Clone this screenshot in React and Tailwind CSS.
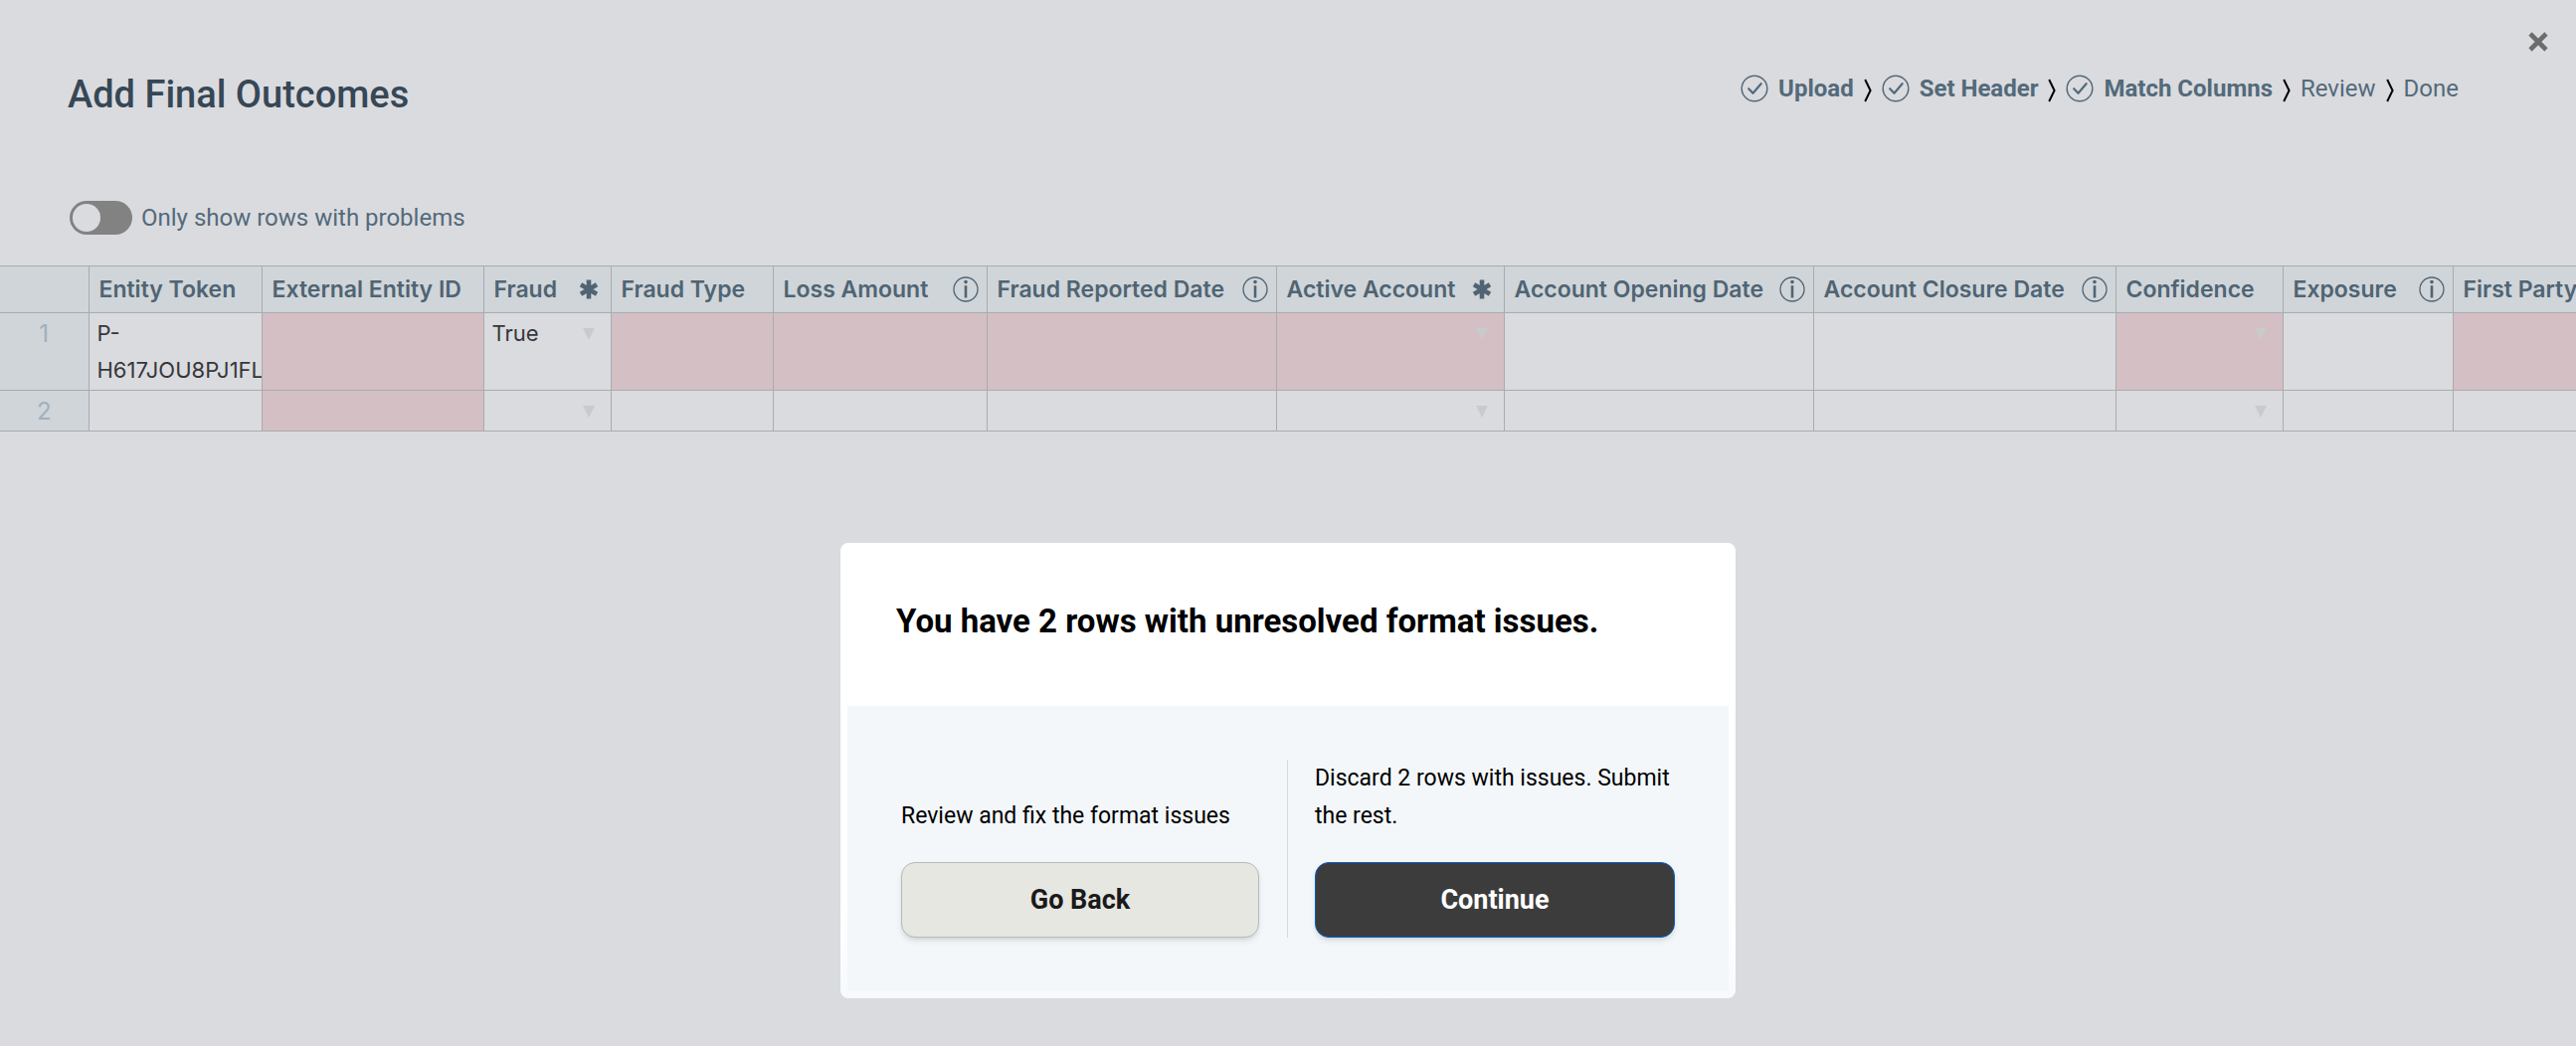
import React from "react";

const steps = [
  { label: "Upload", done: true },
  { label: "Set Header", done: true },
  { label: "Match Columns", done: true },
  { label: "Review", done: false },
  { label: "Done", done: false },
];

const columns = [
  { label: "Entity Token", width: "w-[174px]" },
  { label: "External Entity ID", width: "w-[223px]" },
  { label: "Fraud", width: "w-[128px]", mark: "required", select: true },
  { label: "Fraud Type", width: "w-[163px]" },
  { label: "Loss Amount", width: "w-[215px]", mark: "info" },
  { label: "Fraud Reported Date", width: "w-[291px]", mark: "info" },
  { label: "Active Account", width: "w-[229px]", mark: "required", select: true },
  { label: "Account Opening Date", width: "w-[311px]", mark: "info" },
  { label: "Account Closure Date", width: "w-[304px]", mark: "info" },
  { label: "Confidence", width: "w-[168px]", select: true },
  { label: "Exposure", width: "w-[171px]", mark: "info" },
  { label: "First Party", width: "w-[260px]" },
];

const rows = [
  { height: "h-[78px]", values: { 0: "P-H617JOU8PJ1FLMQ", 2: "True" }, errors: [1, 3, 4, 5, 6, 9, 11] },
  { height: "h-[41px]", values: {}, errors: [1] },
];

function CheckCircle() {
  return (
    <svg className="size-7 shrink-0" viewBox="0 0 28 28" fill="none" stroke="currentColor" strokeWidth="2.2" aria-hidden="true">
      <circle cx="14" cy="14" r="12.8" strokeWidth="1.5" />
      <path d="M8.2 14.2 L12.5 18.8 L20.6 9.2" strokeLinecap="round" strokeLinejoin="round" />
    </svg>
  );
}

function Chevron() {
  return (
    <svg className="mx-[10px] mt-[3px] h-6 w-2 shrink-0 text-black" viewBox="0 0 8 24" fill="none" stroke="currentColor" strokeWidth="2" aria-hidden="true">
      <path d="M1.2 1 L6.6 12 L1.2 23" />
    </svg>
  );
}

function Info() {
  return (
    <svg className="size-[26px] shrink-0" viewBox="0 0 26 26" aria-hidden="true">
      <circle cx="13" cy="13" r="12" fill="none" stroke="currentColor" strokeWidth="1.3" />
      <circle cx="13" cy="5.6" r="1.8" fill="currentColor" />
      <path d="M13 9.2 V21.5" stroke="currentColor" strokeWidth="2.6" />
    </svg>
  );
}

function Required() {
  return (
    <svg className="mr-1 size-5 shrink-0" viewBox="0 0 20 20" fill="none" stroke="currentColor" strokeWidth="4.6" aria-hidden="true">
      <path d="M10 0.5 V19.5 M2 5.2 L18 14.8 M18 5.2 L2 14.8" />
    </svg>
  );
}

function Cell({ column, value, error }) {
  return (
    <td className={`overflow-hidden border border-[#a9acae] px-[8px] pt-[2px] align-top ${error ? "bg-[#d3bfc4]" : ""}`}>
      {column.select ? (
        <div className="flex items-center justify-between pr-2">
          <select
            aria-label={column.label}
            defaultValue={value || ""}
            className="min-w-0 flex-1 appearance-none bg-transparent leading-[37px] outline-none"
          >
            <option value=""></option>
            <option value="True">True</option>
            <option value="False">False</option>
          </select>
          <svg className="size-3 shrink-0 text-[#c8cacc]" viewBox="0 0 12 12" fill="currentColor" aria-hidden="true">
            <path d="M0 0 H12 L6 12 Z" />
          </svg>
        </div>
      ) : (
        value
      )}
    </td>
  );
}

export default function App() {
  return (
    <div className="min-h-screen overflow-hidden bg-[#dadbdf] font-['Roboto',sans-serif] text-[24px] text-[#536a7a]">
      <header className="flex items-start justify-between pt-[18px] pr-[14px] pl-[68px]">
        <h1 className="pt-[50px] text-[38px] leading-[54px] font-medium text-[#364756]">Add Final Outcomes</h1>
        <div className="flex items-start">
          <ol className="flex items-center pt-[52px] leading-[38px]">
            {steps.map((step, i) => (
              <li key={step.label} className={step.done ? "flex items-center font-bold" : "flex items-center"}>
                {i > 0 && <Chevron />}
                {step.done && (
                  <span className="mr-[10px] flex">
                    <CheckCircle />
                  </span>
                )}
                {step.label}
              </li>
            ))}
          </ol>
          <button type="button" aria-label="Close" className="ml-[56px] flex size-12 items-center justify-center text-[#6b6c6e]">
            <svg className="size-5" viewBox="0 0 20 20" stroke="currentColor" strokeWidth="4.6" aria-hidden="true">
              <path d="M2 2 L18 18 M18 2 L2 18" />
            </svg>
          </button>
        </div>
      </header>

      <label className="mt-[78px] ml-[70px] flex w-fit items-center gap-[9px] leading-[38px]">
        <input
          type="checkbox"
          role="switch"
          className="h-[34px] w-[63px] appearance-none rounded-full bg-[#828282] p-[3px] before:block before:size-7 before:rounded-full before:bg-[#dadbdf] checked:before:ml-auto"
        />
        Only show rows with problems
      </label>

      <table className="mt-[29px] w-px table-fixed border-collapse font-['Inter',sans-serif] text-[22px] leading-[37px] text-[#36373b]">
        <thead>
          <tr className="h-[47px] bg-[#cfd5d9] text-[23px] text-[#506473]">
            <th className="w-[89px] border border-l-0 border-[#a9acae]" aria-label="Row number"></th>
            {columns.map((c) => (
              <th key={c.label} scope="col" className={`border border-[#a9acae] p-0 text-left font-semibold ${c.width}`}>
                <div className="flex items-center justify-between pr-[8px] pl-[10px] whitespace-nowrap">
                  {c.label}
                  {c.mark === "info" && <Info />}
                  {c.mark === "required" && <Required />}
                </div>
              </th>
            ))}
          </tr>
        </thead>
        <tbody>
          {rows.map((row, r) => (
            <tr key={r} className={row.height}>
              <th scope="row" className="border border-l-0 border-[#a9acae] bg-[#cfd5d9] pt-[2px] text-center align-top text-[24px] font-normal text-[#9fb0bd]">
                {r + 1}
              </th>
              {columns.map((c, i) => (
                <Cell key={c.label} column={c} value={row.values[i]} error={row.errors.includes(i)} />
              ))}
            </tr>
          ))}
        </tbody>
      </table>

      <div className="fixed inset-0 flex items-end justify-center pb-12">
        <section
          role="dialog"
          aria-modal="true"
          aria-labelledby="dialog-title"
          className="w-full max-w-[900px] rounded-[8px] bg-linear-to-b from-white from-80% to-[#f6faff] p-[7px] text-black"
        >
          <h2 id="dialog-title" className="px-[49px] pt-[50px] pb-[63px] text-[33px] leading-[44px] font-bold">
            You have 2 rows with unresolved format issues.
          </h2>
          <div className="grid grid-cols-2 bg-[#f3f7fa] px-[54px] py-[54px] text-[23px] leading-[38px]">
            <div className="flex flex-col justify-end gap-[27px] border-r border-[#d6dade] pr-[28px]">
              <p>Review and fix the format issues</p>
              <button type="button" className="h-[76px] rounded-[14px] border border-[#b8babb] bg-[#e6e7e1] text-[27px] font-bold text-[#1a1a1a] shadow-md">
                Go Back
              </button>
            </div>
            <div className="flex flex-col justify-end gap-[27px] pl-[27px]">
              <p>Discard 2 rows with issues. Submit the rest.</p>
              <button type="button" className="h-[76px] rounded-[14px] border border-[#0b5cc4] bg-[#3c3c3c] text-[27px] font-bold text-white shadow-md">
                Continue
              </button>
            </div>
          </div>
        </section>
      </div>
    </div>
  );
}
